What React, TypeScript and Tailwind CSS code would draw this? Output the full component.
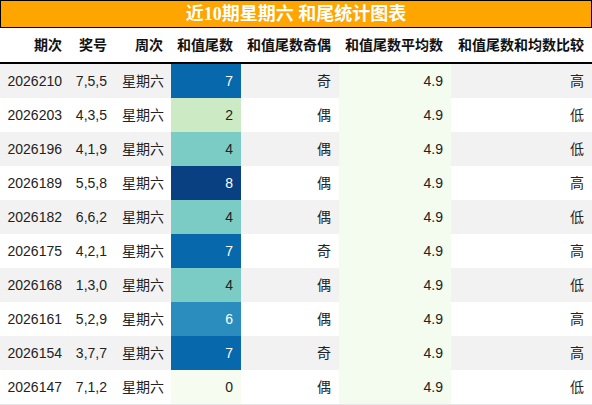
import React from "react";

const rows = [
  ["2026210", "7,5,5", "星期六", 7, "奇", "高"],
  ["2026203", "4,3,5", "星期六", 2, "偶", "低"],
  ["2026196", "4,1,9", "星期六", 4, "偶", "低"],
  ["2026189", "5,5,8", "星期六", 8, "偶", "高"],
  ["2026182", "6,6,2", "星期六", 4, "偶", "低"],
  ["2026175", "4,2,1", "星期六", 7, "奇", "高"],
  ["2026168", "1,3,0", "星期六", 4, "偶", "低"],
  ["2026161", "5,2,9", "星期六", 6, "偶", "高"],
  ["2026154", "3,7,7", "星期六", 7, "奇", "高"],
  ["2026147", "7,1,2", "星期六", 0, "偶", "低"],
] as const;

const cellColor: Record<number, string> = {
  0: "bg-[#f7fcf0] text-[#222]",
  2: "bg-[#ccebc5] text-[#222]",
  4: "bg-[#7bccc4] text-[#222]",
  6: "bg-[#2b8cbe] text-white",
  7: "bg-[#0868ac] text-white",
  8: "bg-[#084081] text-white",
};

const headers = ["期次", "奖号", "周次", "和值尾数", "和值尾数奇偶", "和值尾数平均数", "和值尾数和均数比较"];

export default function App() {
  return (
    <div
      className="w-[592px] h-[405px] bg-white overflow-hidden"
      style={{ fontFamily: '"Liberation Sans", "Noto Sans CJK SC", sans-serif' }}
    >
      <div
        className="h-[28px] bg-[#ffa500] border border-black flex items-center justify-center text-white font-bold text-[18px]"
        style={{ fontFamily: '"Liberation Serif", "Noto Sans CJK SC", serif' }}
      >
        近10期星期六 和尾统计图表
      </div>
      <div className="grid grid-cols-[70px_45px_56px_70px_98px_112px_141px] h-[36px] border-b-2 border-black text-[14px] font-bold text-[#111]">
        {headers.map((h) => (
          <div key={h} className="flex items-center justify-end pr-[8px] whitespace-nowrap">
            {h}
          </div>
        ))}
      </div>
      {rows.map((r, i) => (
        <div
          key={r[0]}
          className={`grid grid-cols-[70px_45px_56px_70px_98px_112px_141px] h-[34px] text-[14px] text-[#222] ${
            i % 2 === 0 ? "bg-[#f2f2f2]" : "bg-white"
          } ${i === rows.length - 1 ? "border-b border-[#e6e6e6] h-[35px]" : ""}`}
        >
          <div className="flex items-center justify-end pr-[8px]">{r[0]}</div>
          <div className="flex items-center justify-end pr-[8px]">{r[1]}</div>
          <div className="flex items-center justify-end pr-[7px]">{r[2]}</div>
          <div className={`flex items-center justify-end pr-[8px] ${cellColor[r[3]]}`}>{r[3]}</div>
          <div className="flex items-center justify-end pr-[8px]">{r[4]}</div>
          <div className="flex items-center justify-end pr-[8px] bg-[#f4fbef]">4.9</div>
          <div className="flex items-center justify-end pr-[8px]">{r[5]}</div>
        </div>
      ))}
    </div>
  );
}
